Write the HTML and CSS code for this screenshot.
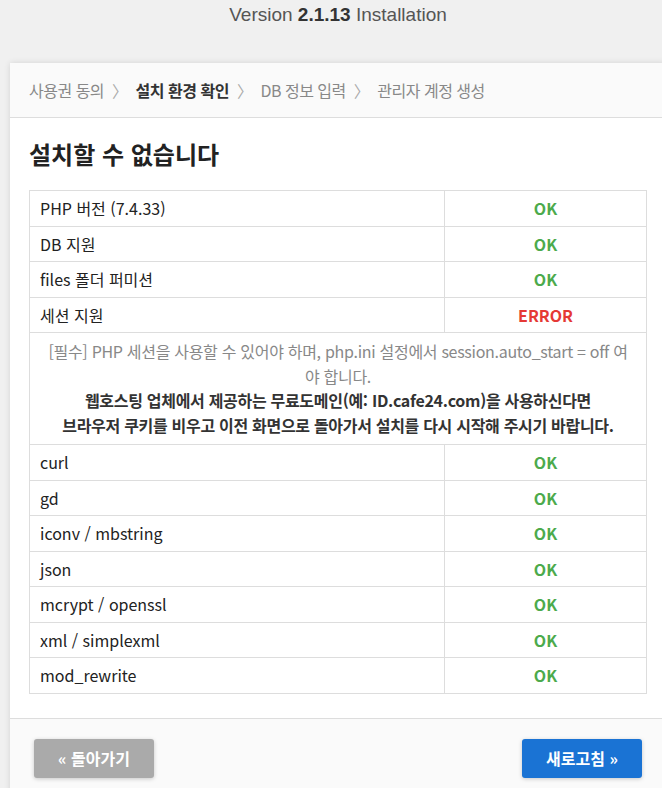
FILE: index.html
```html
<!DOCTYPE html>
<html lang="ko">
<head>
  <meta charset="UTF-8">
  <meta name="viewport" content="width=device-width, initial-scale=1.0">
  <title>Version 2.1.13 Installation</title>
  <link rel="stylesheet" href="styles.css">
</head>
<body>

  <!-- Page title -->
  <h1 class="page-title">Version <b>2.1.13</b> Installation</h1>

  <div class="install-box">

    <!-- Steps -->
    <div class="steps">
      <span>사용권 동의</span>
      <span class="sep">&#x232A;</span>
      <span class="current">설치 환경 확인</span>
      <span class="sep">&#x232A;</span>
      <span>DB 정보 입력</span>
      <span class="sep">&#x232A;</span>
      <span>관리자 계정 생성</span>
    </div>

    <!-- Check result -->
    <div class="content">
      <h2>설치할 수 없습니다</h2>

      <table class="check-table">
        <tr><td class="name">PHP 버전 (7.4.33)</td><td class="ok">OK</td></tr>
        <tr><td class="name">DB 지원</td><td class="ok">OK</td></tr>
        <tr><td class="name">files 폴더 퍼미션</td><td class="ok">OK</td></tr>
        <tr><td class="name">세션 지원</td><td class="error">ERROR</td></tr>
        <tr>
          <td class="message" colspan="2">
            [필수] PHP 세션을 사용할 수 있어야 하며, php.ini 설정에서 session.auto_start = off 여야 합니다.
            <strong>웹호스팅 업체에서 제공하는 무료도메인(예: ID.cafe24.com)을 사용하신다면<br>브라우저 쿠키를 비우고 이전 화면으로 돌아가서 설치를 다시 시작해 주시기 바랍니다.</strong>
          </td>
        </tr>
        <tr><td class="name">curl</td><td class="ok">OK</td></tr>
        <tr><td class="name">gd</td><td class="ok">OK</td></tr>
        <tr><td class="name">iconv / mbstring</td><td class="ok">OK</td></tr>
        <tr><td class="name">json</td><td class="ok">OK</td></tr>
        <tr><td class="name">mcrypt / openssl</td><td class="ok">OK</td></tr>
        <tr><td class="name">xml / simplexml</td><td class="ok">OK</td></tr>
        <tr><td class="name">mod_rewrite</td><td class="ok">OK</td></tr>
      </table>
    </div>

    <!-- Buttons -->
    <div class="actions">
      <button class="btn btn-back">&laquo; 돌아가기</button>
      <button class="btn btn-next">새로고침 &raquo;</button>
    </div>

  </div>

</body>
</html>
```

FILE: styles.css
```css
body {
  font-family: "Noto Sans CJK KR", "Noto Sans", sans-serif;
  background-color: #f0f0f0;
  color: #333;
  margin: 0;
  padding: 0;
  overflow: hidden;
}

.page-title {
  font-family: "Liberation Sans", Arial, sans-serif;
  font-size: 19px;
  font-weight: normal;
  color: #555;
  text-align: center;
  margin: 0;
  padding: 4px 0 0 14px;
  height: 59px;
  line-height: 22px;
}

.page-title b {
  color: #333;
}

.install-box {
  width: 656px;
  margin-left: 10px;
  background: white;
  box-shadow: 0 0 6px rgba(0, 0, 0, 0.12);
}

.steps {
  display: flex;
  align-items: center;
  gap: 8px;
  height: 54px;
  padding: 0 19px;
  background: #fafafa;
  border-bottom: 1px solid #ddd;
  font-size: 16px;
  letter-spacing: -0.5px;
  color: #888;
}

.steps .sep {
  font-size: 16px;
  color: #aaa;
}

.steps .current {
  font-weight: bold;
  color: #333;
}

.content {
  padding: 19px 19px 24px;
}

.content h2 {
  font-size: 24px;
  font-weight: bold;
  color: #222;
  margin: 0 0 19px;
  line-height: 34px;
}

.check-table {
  width: 100%;
  border-collapse: collapse;
  font-size: 16px;
}

.check-table td {
  border: 1px solid #ddd;
  padding: 6px 10px;
  line-height: 22.5px;
}

.check-table .name {
  width: 394px;
  color: #222;
}

.check-table .ok,
.check-table .error {
  text-align: center;
  font-weight: bold;
}

.check-table .ok {
  color: #4caa4c;
}

.check-table .error {
  color: #e53935;
}

.check-table .message {
  text-align: center;
  color: #888;
  line-height: 24.5px;
  letter-spacing: -0.3px;
  padding: 6px 14px 7px;
}

.check-table .message strong {
  display: block;
  color: #333;
}

.actions {
  display: flex;
  justify-content: space-between;
  padding: 20px 24px 30px;
  background: #fafafa;
  border-top: 1px solid #ddd;
}

.btn {
  width: 120px;
  height: 39px;
  border: none;
  border-radius: 3px;
  font-family: "Noto Sans CJK KR", sans-serif;
  font-size: 16px;
  font-weight: bold;
  color: white;
  cursor: pointer;
  box-shadow: 0 1px 4px rgba(0, 0, 0, 0.2);
}

.btn-back {
  background-color: #aaa;
}

.btn-next {
  background-color: #1a73d4;
}
```
